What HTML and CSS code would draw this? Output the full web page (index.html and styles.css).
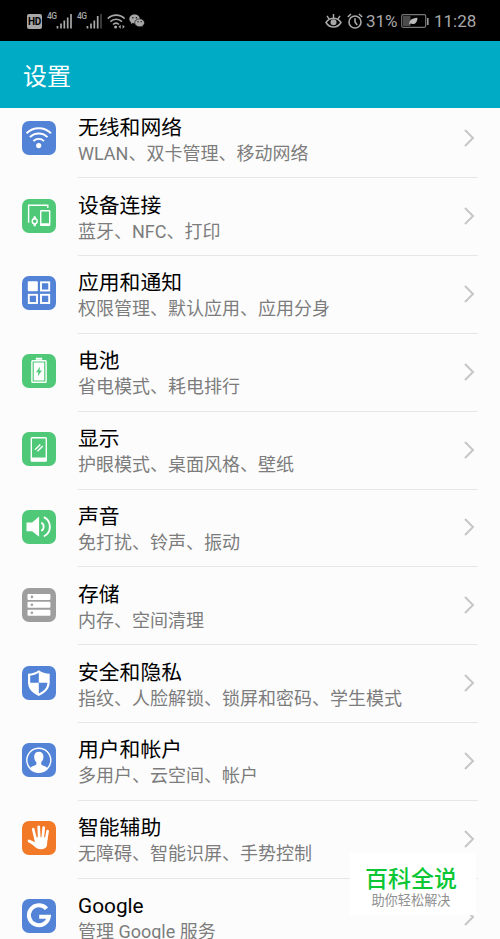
FILE: index.html
```
<!DOCTYPE html>
<html lang="zh-CN">
<head>
  <meta charset="utf-8"/>
  <meta name="viewport" content="width=device-width"/>
  <title>设置</title>
  <link rel="stylesheet" href="styles.css">
</head>
<body>
  <svg class="defs">
    <symbol id="chevron" viewBox="0 0 12 20"><path d="M2 2 L10 10 L2 18" fill="none" stroke="#c6c6c6" stroke-width="2"/></symbol>
  </svg>
  <div class="status">
    <div class="status-left">
      <span class="hd">HD</span>
      <span class="net">4G</span>
      <svg class="bars" width="16" height="16" viewBox="0 0 16 16"><path d="M1.5 15.5v-2.5M5 15.5v-5M8.3 15.5v-8M11.7 15.5v-11M15 15.5V1"/></svg>
      <span class="net second">4G</span>
      <svg class="bars" width="16" height="16" viewBox="0 0 16 16"><path d="M1.5 15.5v-2.5M5 15.5v-5M8.3 15.5v-8M11.7 15.5v-12.5"/><path class="off" d="M15 15.5V1"/></svg>
      <svg class="wifi" width="19" height="16" viewBox="0 0 19 16">
        <g fill="none" stroke="#a8a8a8" stroke-width="1.6"><path d="M.8 5.6a12 12 0 0 1 16.8 0M3.4 8.6a8.2 8.2 0 0 1 11.6 0M6 11.5a4.5 4.5 0 0 1 6 0"/></g>
        <circle cx="8.6" cy="14" r="1.5" fill="#a8a8a8"/>
        <path d="M11.5 13.8l2.2-2v4zM17.8 13.8l-2.2-2v4z" fill="#a8a8a8"/>
      </svg>
      <svg class="wechat" width="16" height="14" viewBox="0 0 16 14">
        <path d="M5.600.5C2.600.5.3 2.500.3 5c0 1.400.8 2.600 1.900 3.400l-.4 1.700 1.900-1c.6.2 1.200.3 1.900.3 3 0 5.300-2 5.300-4.400S8.600.5 5.600.5z" fill="#a8a8a8"/>
        <path d="M10.600 4.800c-2.700 0-4.900 1.800-4.900 4s2.200 4 4.900 4c.6 0 1.200-.1 1.700-.3l1.600.9-.4-1.500c1.200-.7 2-1.800 2-3.100 0-2.200-2.200-4-4.900-4z" fill="#a8a8a8" stroke="#000" stroke-width=".6"/>
        <g><circle cx="3.900" cy="3.700" r=".7"/><circle cx="7.300" cy="3.700" r=".7"/><circle cx="9" cy="7.700" r=".6"/><circle cx="12.200" cy="7.700" r=".6"/></g>
      </svg>
    </div>
    <div class="status-right">
      <svg class="eye" width="17" height="16" viewBox="0 0 17 16">
        <path d="M1 9.500C3 6.500 5.600 5.200 8.500 5.200s5.500 1.300 7.500 4.300c-1.800 3-4.500 4.500-7.500 4.500S2.800 12.500 1 9.500zM8.500 5V1M4 5.800L2 2.800M13 5.800l2-3" fill="none" stroke="#a8a8a8" stroke-width="1.500"/>
        <circle cx="8.500" cy="9.200" r="3" fill="#a8a8a8"/>
      </svg>
      <svg class="clock" width="16" height="16" viewBox="0 0 16 16">
        <g fill="none" stroke="#a8a8a8" stroke-width="1.600"><circle cx="8" cy="9" r="6"/><path d="M8 5.200V9l2.200 3M.8 4L4 1M15.200 4L12 1"/></g>
      </svg>
      <span class="percent">31%</span>
      <svg class="battery" width="28" height="14" viewBox="0 0 28 14">
        <rect x=".7" y=".7" width="24" height="12.600" rx="1.500" fill="none" stroke="#777" stroke-width="1.200"/>
        <rect x="2" y="2" width="7.500" height="10" fill="#4b4b4b"/>
        <rect x="26" y="4" width="1.600" height="7" fill="#999"/>
        <path d="M8.200 10.600C8 6.500 10.500 4 16.500 3.700c-.2 5.200-3 7.200-6.800 5.900z" fill="#bbb"/>
      </svg>
      <span class="time">11:28</span>
    </div>
  </div>
  <header class="header">设置</header>

  <main class="list">
    <div class="row">
      <svg class="icon blue" viewBox="0 0 34 34">
        <g class="line"><path d="M4.500 12.200a17.500 17.500 0 0 1 24.500 0"/><path d="M7.900 16.200a12.400 12.400 0 0 1 17.600 0"/><path d="M11.400 20.100a7.500 7.500 0 0 1 10.600 0"/></g>
        <circle class="fill" cx="16.700" cy="24.600" r="2.600"/>
      </svg>
      <div class="body"><div class="text"><h2>无线和网络</h2><p>WLAN、双卡管理、移动网络</p></div><svg class="arrow"><use href="#chevron"/></svg></div>
    </div>
    <div class="row">
      <svg class="icon green" viewBox="0 0 34 34">
        <g class="line thin"><path d="M6.600 23.700V6.300h19.200v2.700"/><rect x="18.700" y="11.800" width="9" height="14.500" rx=".5"/><circle cx="12.700" cy="22.200" r="2.500"/></g>
        <path class="fill" d="M11.200 20l.6-2.700h1.800l.6 2.700zM11.200 24.400l.6 2.900h1.800l.6-2.900zM18.700 24.300h9v2.500h-9z"/>
      </svg>
      <div class="body"><div class="text"><h2>设备连接</h2><p>蓝牙、NFC、打印</p></div><svg class="arrow"><use href="#chevron"/></svg></div>
    </div>
    <div class="row">
      <svg class="icon blue" viewBox="0 0 34 34">
        <rect class="fill" x="5.800" y="5.300" width="10" height="10" rx=".8"/>
        <g class="line"><rect x="19" y="6.300" width="8.200" height="8.200"/><rect x="6.800" y="18.800" width="8.200" height="8.200"/><rect x="19" y="18.800" width="8.200" height="8.200"/></g>
      </svg>
      <div class="body"><div class="text"><h2>应用和通知</h2><p>权限管理、默认应用、应用分身</p></div><svg class="arrow"><use href="#chevron"/></svg></div>
    </div>
    <div class="row">
      <svg class="icon green" viewBox="0 0 34 34">
        <rect class="line thin" x="9.900" y="6.700" width="14.200" height="21.600" rx=".8"/>
        <path class="fill" d="M13.800 3.800h6.400v2h-6.400zM11.800 8.600h10.400v17.800H11.800z"/>
        <path d="M18.100 12.500l-4 5.700h2.300l-.7 4.300 4.200-6h-2.400z" fill="#4fc878"/>
      </svg>
      <div class="body"><div class="text"><h2>电池</h2><p>省电模式、耗电排行</p></div><svg class="arrow"><use href="#chevron"/></svg></div>
    </div>
    <div class="row">
      <svg class="icon green" viewBox="0 0 34 34">
        <rect class="line thin" x="9.300" y="5.700" width="15" height="23.400" rx=".8"/>
        <path class="fill" d="M9 25.600h15.600v3.600H9z"/>
        <path class="line thin" d="M13 17.800l5.300-5.300M15.500 19.300l5.300-5.300"/>
      </svg>
      <div class="body"><div class="text"><h2>显示</h2><p>护眼模式、桌面风格、壁纸</p></div><svg class="arrow"><use href="#chevron"/></svg></div>
    </div>
    <div class="row">
      <svg class="icon green" viewBox="0 0 34 34">
        <path class="fill" d="M4.500 12.400h5.600l7-5.900v20.300l-7-5.600H4.500z"/>
        <path class="line" d="M19.300 12.700a4.700 4.700 0 0 1 0 8.200M21.800 7.200a10.700 10.700 0 0 1 0 19.300"/>
      </svg>
      <div class="body"><div class="text"><h2>声音</h2><p>免打扰、铃声、振动</p></div><svg class="arrow"><use href="#chevron"/></svg></div>
    </div>
    <div class="row">
      <svg class="icon gray" viewBox="0 0 34 34">
        <g class="fill"><rect x="5.500" y="5.900" width="22.900" height="6" rx=".8"/><rect x="5.500" y="13.800" width="22.900" height="6" rx=".8"/><rect x="5.500" y="21.700" width="22.900" height="6" rx=".8"/></g>
        <g fill="#9e9e9e"><circle cx="9.900" cy="8.900" r="1.300"/><circle cx="9.900" cy="16.800" r="1.300"/><circle cx="9.900" cy="24.700" r="1.300"/></g>
      </svg>
      <div class="body"><div class="text"><h2>存储</h2><p>内存、空间清理</p></div><svg class="arrow"><use href="#chevron"/></svg></div>
    </div>
    <div class="row">
      <svg class="icon blue" viewBox="0 0 34 34">
        <path class="fill" d="M16.800 4.200c3 2.200 6.600 3.400 10.900 3.600v8.500c0 6.500-4.500 11-10.900 13.600C10.400 27.300 6 22.800 6 16.300V7.800c4.200-.2 7.800-1.400 10.800-3.600z"/>
        <path d="M16.800 6.800v10H8.200V9.700c3.200-.3 6.100-1.300 8.600-2.900zM16.800 16.800h8.600c-.2 5-3.500 8.500-8.600 10.700z" fill="#5283d6"/>
      </svg>
      <div class="body"><div class="text"><h2>安全和隐私</h2><p>指纹、人脸解锁、锁屏和密码、学生模式</p></div><svg class="arrow"><use href="#chevron"/></svg></div>
    </div>
    <div class="row">
      <svg class="icon blue" viewBox="0 0 34 34">
        <circle class="line thin" cx="16.800" cy="17.200" r="12"/>
        <path class="fill" d="M16.800 8.800c-3 0-4.800 2-4.600 5.100.1 2.300.9 4.200 2.200 5.300v2c-.8 1.400-4.700 1.700-6.300 4 2.200 2.600 5.200 4 8.700 4s6.500-1.400 8.700-4c-1.600-2.300-5.500-2.600-6.300-4v-2c1.300-1.100 2.100-3 2.200-5.300.2-3.100-1.600-5.100-4.600-5.100z"/>
      </svg>
      <div class="body"><div class="text"><h2>用户和帐户</h2><p>多用户、云空间、帐户</p></div><svg class="arrow"><use href="#chevron"/></svg></div>
    </div>
    <div class="row">
      <svg class="icon orange" viewBox="0 0 34 34">
        <path class="line hand" d="M13.600 18L11.200 8.200M17.200 17L16.700 5.900M20.700 17L21.700 6.500M24.200 18.500L25.600 10.200M13 23.500L7 20"/>
        <path class="fill" d="M12.300 16.200h13.200l-.4 7.300c-.2 3.200-2.600 4.700-6.300 4.700-3.200 0-5.100-1.200-6.800-3.200l-5.700-5.500c2.300-.7 4 .4 6.500 2z"/>
      </svg>
      <div class="body"><div class="text"><h2>智能辅助</h2><p>无障碍、智能识屏、手势控制</p></div><svg class="arrow"><use href="#chevron"/></svg></div>
    </div>
    <div class="row">
      <svg class="icon blue" viewBox="0 0 34 34">
        <path class="line g" d="M24.500 9.700A10 10 0 1 0 26.800 17.800H17.200"/>
      </svg>
      <div class="body"><div class="text"><h2>Google</h2><p>管理 Google 服务</p></div><svg class="arrow"><use href="#chevron"/></svg></div>
    </div>
  </main>

  <div class="badge">
    <strong>百科全说</strong>
    <span>助你轻松解决</span>
  </div>
</body>
</html>
```
FILE: styles.css
```
* { box-sizing: border-box; }
body {
  margin: 0; height: 939px; overflow: hidden; position: relative;
  display: flex; flex-direction: column; background: #fcfcfc; color: #000;
  font-family: Roboto, "Noto Sans CJK SC", sans-serif;
}
h2, p { margin: 0; font-weight: 400; line-height: 26px; white-space: nowrap; }
svg { display: block; flex: none; }
.defs { display: none; }

.status { flex: none; height: 41px; padding: 0 25px 0 27px; background: #000; color: #a8a8a8; display: flex; justify-content: space-between; }
.status-left, .status-right { display: flex; align-items: center; padding-top: 1px; }
.hd { width: 15px; height: 15px; border-radius: 2px; background: #a8a8a8; color: #000; font-size: 10px; font-weight: 700; line-height: 15px; text-align: center; letter-spacing: -0.3px; }
.net { width: 9px; margin: 0 0 9px 5px; font-size: 8.5px; font-weight: 500; line-height: 9px; letter-spacing: -0.5px; }
.bars { fill: none; stroke: #a8a8a8; stroke-width: 1.7; }
.off { stroke: #444; }
.wifi { margin-left: 5px; }
.wechat { margin-left: 3px; }
.clock { margin-left: 5px; }
.percent { margin-left: 3px; width: 35px; font-size: 17px; }
.time { width: 41px; margin-left: 5px; font-size: 17px; white-space: nowrap; }

.header { flex: none; height: 67px; padding-left: 23px; background: #00acc5; color: #fff; font-size: 24px; line-height: 72px; }

/* first row is scrolled a little way under the header */
.list { flex: 1; min-height: 0; overflow: hidden; display: flex; flex-direction: column; }
.row { flex: none; height: 77.85px; padding: 0 22px; display: flex; align-items: center; gap: 22px; }
.row:first-child { margin-top: -7.7px; }
.body { flex: 1; height: 100%; display: flex; align-items: center; justify-content: space-between; border-bottom: 1px solid #e6e6e6; }
.text { padding-top: 4px; }
.text h2 { font-size: 20.8px; }
.text p { font-size: 18px; color: #7c7c7c; }
.arrow { width: 12px; height: 20px; margin: 0 3px 1px 0; }

.icon { width: 34px; height: 34px; margin-bottom: 3px; border-radius: 7px; }
.blue { background: #5283d6; }
.green { background: #4fc878; }
.gray { background: #9e9e9e; }
.orange { background: #f27927; }
.fill { fill: #fff; }
.line { fill: none; stroke: #fff; stroke-width: 1.9; }
.thin { stroke-width: 1.4; }
.hand { stroke-width: 2.7; stroke-linecap: round; }
.g { stroke-width: 4; }

.badge {
  position: absolute; left: 350px; top: 853px; width: 126px; height: 62px; padding-top: 13px;
  background: #fff; display: flex; flex-direction: column; align-items: center; white-space: nowrap;
}
.badge strong { padding-right: 4px; font-size: 23px; font-weight: 500; line-height: 27px; color: #0cc735; }
.badge span { padding-right: 4px; font-size: 13.2px; line-height: 16px; color: #909090; }
```
